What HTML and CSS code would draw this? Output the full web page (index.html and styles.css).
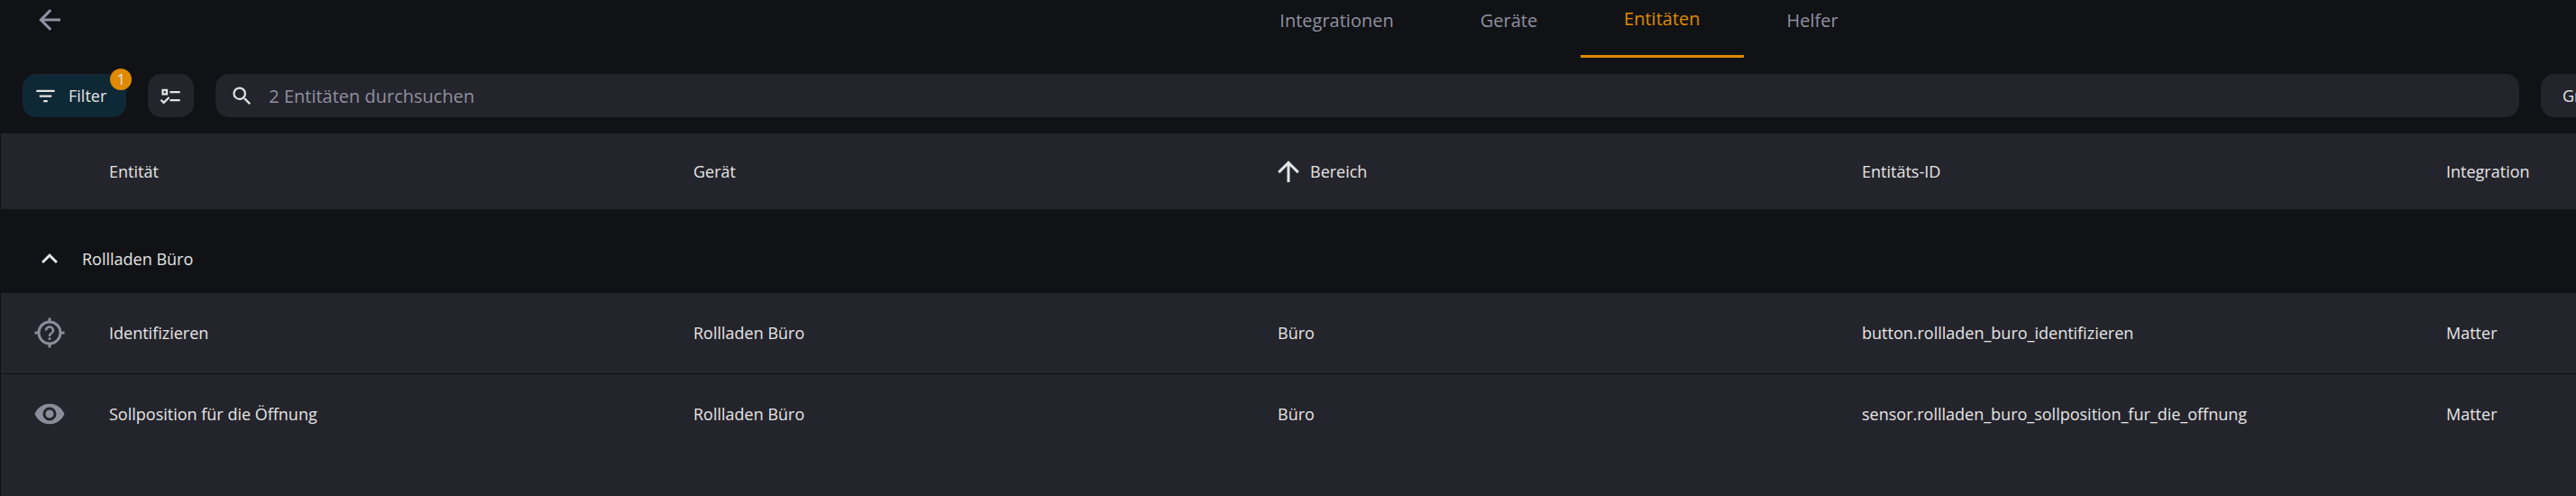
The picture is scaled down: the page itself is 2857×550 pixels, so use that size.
FILE: index.html
```html
<!DOCTYPE html>
<html lang="de">
<head>
  <meta charset="UTF-8">
  <meta name="viewport" content="width=device-width, initial-scale=1.0">
  <title>Entitäten</title>
  <link rel="stylesheet" href="styles.css">
</head>
<body>
  <header class="header">
    <a class="back" href="#" aria-label="Zurück">
      <svg class="icon" viewBox="0 0 24 24"><path d="M20,11V13H8L13.5,18.5L12.08,19.92L4.16,12L12.08,4.08L13.5,5.5L8,11H20Z"/></svg>
    </a>
    <nav class="tabs">
      <a class="tab" href="#integrationen">Integrationen</a>
      <a class="tab" href="#geraete">Geräte</a>
      <a class="tab active" href="#entitaeten">Entitäten</a>
      <a class="tab" href="#helfer">Helfer</a>
    </nav>
  </header>

  <main class="card">
    <div class="toolbar">
      <button class="chip filter" type="button">
        <svg class="icon-small" viewBox="0 0 24 24"><path d="M6,13H18V11H6M3,6V8H21V6M10,18H14V16H10V18Z"/></svg>
        Filter
        <span class="badge">1</span>
      </button>
      <button class="chip select" type="button" aria-label="Auswahlmodus">
        <svg class="icon-small" viewBox="0 0 24 24"><path d="M3,5H9V11H3V5M5,7V9H7V7H5M11,7H21V9H11V7M11,15H21V17H11V15M5,20L1.5,16.5L2.91,15.09L5,17.17L9.59,12.59L11,14L5,20Z"/></svg>
      </button>
      <label class="search">
        <svg class="icon-small" viewBox="0 0 24 24"><path d="M9.5,3A6.5,6.5 0 0,1 16,9.5C16,11.11 15.41,12.59 14.44,13.73L14.71,14H15.5L20.5,19L19,20.5L14,15.5V14.71L13.73,14.44C12.59,15.41 11.11,16 9.5,16A6.5,6.5 0 0,1 3,9.5A6.5,6.5 0 0,1 9.5,3M9.5,5C7,5 5,7 5,9.5C5,12 7,14 9.5,14C12,14 14,12 14,9.5C14,7 12,5 9.5,5Z"/></svg>
        <input type="text" placeholder="2 Entitäten durchsuchen" aria-label="2 Entitäten durchsuchen">
      </label>
      <button class="chip group" type="button">Gruppieren</button>
    </div>

    <table class="entities">
      <colgroup>
        <col class="col-icon">
        <col class="col-text">
        <col class="col-text">
        <col class="col-text">
        <col class="col-text">
        <col class="col-text">
      </colgroup>
      <thead>
        <tr>
          <th></th>
          <th>Entität</th>
          <th>Gerät</th>
          <th>
            <span class="sorted">
              <svg class="icon" viewBox="0 0 24 24"><path d="M13,20H11V8L5.5,13.5L4.08,12.08L12,4.16L19.92,12.08L18.5,13.5L13,8V20Z"/></svg>
              Bereich
            </span>
          </th>
          <th>Entitäts-ID</th>
          <th>Integration</th>
        </tr>
      </thead>
      <tbody>
        <tr class="group-row">
          <td colspan="6">
            <button class="group-toggle" type="button">
              <svg class="icon" viewBox="0 0 24 24"><path d="M7.41,15.41L12,10.83L16.59,15.41L18,14L12,8L6,14L7.41,15.41Z"/></svg>
              Rollladen Büro
            </button>
          </td>
        </tr>
        <tr>
          <td class="cell-icon">
            <svg class="icon" viewBox="0 0 24 24"><path d="M20.94,11C20.5,6.83 17.17,3.5 13,3.06V1H11V3.06C6.83,3.5 3.5,6.83 3.06,11H1V13H3.06C3.5,17.17 6.83,20.5 11,20.94V23H13V20.94C17.17,20.5 20.5,17.17 20.94,13H23V11H20.94M12,19A7,7 0 0,1 5,12A7,7 0 0,1 12,5A7,7 0 0,1 19,12A7,7 0 0,1 12,19M11.13,15.5H12.88V17.25H11.13V15.5M12,6.75C13.93,6.75 15.5,8.32 15.5,10.25C15.5,11.4 14.8,12.02 14.11,12.62C13.45,13.2 12.88,13.71 12.88,14.63H11.13C11.13,13.03 11.95,12.4 12.68,11.84C13.25,11.41 13.75,11.02 13.75,10.25A1.75,1.75 0 0,0 12,8.5A1.75,1.75 0 0,0 10.25,10.25H8.5C8.5,8.32 10.07,6.75 12,6.75Z"/></svg>
          </td>
          <td>Identifizieren</td>
          <td>Rollladen Büro</td>
          <td>Büro</td>
          <td>button.rollladen_buro_identifizieren</td>
          <td>Matter</td>
        </tr>
        <tr>
          <td class="cell-icon">
            <svg class="icon" viewBox="0 0 24 24"><path d="M12,9A3,3 0 0,0 9,12A3,3 0 0,0 12,15A3,3 0 0,0 15,12A3,3 0 0,0 12,9M12,17A5,5 0 0,1 7,12A5,5 0 0,1 12,7A5,5 0 0,1 17,12A5,5 0 0,1 12,17M12,4.5C7,4.5 2.73,7.61 1,12C2.73,16.39 7,19.5 12,19.5C17,19.5 21.27,16.39 23,12C21.27,7.61 17,4.5 12,4.5Z"/></svg>
          </td>
          <td>Sollposition für die Öffnung</td>
          <td>Rollladen Büro</td>
          <td>Büro</td>
          <td>sensor.rollladen_buro_sollposition_fur_die_offnung</td>
          <td>Matter</td>
        </tr>
      </tbody>
    </table>
  </main>
</body>
</html>
```

FILE: styles.css
```css
* {
  box-sizing: border-box;
}
body {
  margin: 0;
  min-height: 100vh;
  display: flex;
  flex-direction: column;
  overflow: hidden;
  background-color: #111215;
  color: #e4e4e4;
  font-family: "Segoe UI", "Open Sans", "Noto Sans", sans-serif;
  font-size: 18px;
}
button,
input {
  font: inherit;
  color: inherit;
}
svg {
  display: block;
  flex: none;
  fill: currentColor;
}
.icon {
  width: 36px;
  height: 36px;
}
.icon-small {
  width: 27px;
  height: 27px;
}

/* top bar */
.header {
  display: grid;
  grid-template-columns: 48% auto;
  height: 64px;
  color: #9090a0;
}
.back {
  padding: 4px 37px;
  color: inherit;
}
.tabs {
  display: flex;
}
.tab {
  padding: 8px 48px 0;
  color: inherit;
  font-size: 20px;
  line-height: 30px;
  text-decoration: none;
}
.tab.active {
  padding-top: 6px;
  border-bottom: 3px solid #df8a00;
  color: #df8a00;
}

/* toolbar */
.card {
  flex: 1;
  display: flex;
  flex-direction: column;
  padding-left: 1px;
}
.toolbar {
  display: grid;
  grid-template-columns: auto auto 1fr 39px;
  gap: 24px;
  padding: 18px 0 18px 24px;
}
.chip {
  display: flex;
  align-items: center;
  height: 48px;
  padding: 0 12px;
  border: none;
  border-radius: 15px;
  background-color: #24242c;
  cursor: pointer;
}
.filter {
  position: relative;
  gap: 12px;
  padding-right: 22px;
  background-color: #0e2835;
}
.badge {
  position: absolute;
  top: -6px;
  right: -6px;
  width: 24px;
  height: 24px;
  border-radius: 50%;
  background-color: #df8a00;
  font-size: 16px;
  line-height: 24px;
  text-align: center;
}
.group {
  width: max-content;
  padding: 0 24px;
}
.search {
  display: flex;
  align-items: center;
  gap: 16px;
  height: 48px;
  padding: 0 16px;
  border-radius: 15px;
  background-color: #24242c;
}
.search input {
  flex: 1;
  padding: 0;
  border: none;
  outline: none;
  background: none;
  font-size: 20px;
}
.search input::placeholder {
  color: #9090a0;
  opacity: 1;
}

/* table */
.card::after {
  content: "";
  flex: 1;
  background-color: #24242c;
}
.entities {
  width: max-content;
  table-layout: fixed;
  border-collapse: collapse;
  background-color: #24242c;
}
.col-icon {
  width: 96px;
}
.col-text {
  width: 648px;
}
.entities th,
.entities td {
  height: 90px;
  padding: 0 24px;
  font-weight: normal;
  text-align: left;
  white-space: nowrap;
}
.entities th {
  height: 84px;
}
.sorted {
  display: flex;
  align-items: center;
  gap: 6px;
  margin-left: -6px;
}
.entities tr + tr td {
  border-top: 1px solid #111215;
}
.entities .group-row td {
  height: 92px;
  padding: 18px 36px 0;
  background-color: #111215;
}
.group-toggle {
  display: flex;
  align-items: center;
  gap: 18px;
  padding: 0;
  border: none;
  background: none;
  cursor: pointer;
}
.entities .cell-icon {
  padding: 0 24px 0 36px;
  color: #8c8c9a;
}
```
